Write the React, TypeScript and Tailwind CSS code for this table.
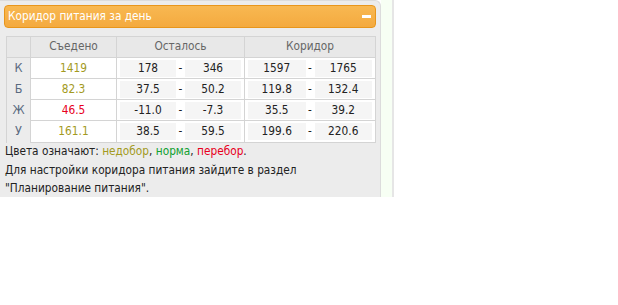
import React from 'react';

type Row = {
  label: string;
  eaten: string;
  eatenColor: string;
  left: [string, string];
  range: [string, string];
};

const rows: Row[] = [
  { label: 'К', eaten: '1419', eatenColor: 'text-[#a39a1e]', left: ['178', '346'], range: ['1597', '1765'] },
  { label: 'Б', eaten: '82.3', eatenColor: 'text-[#a39a1e]', left: ['37.5', '50.2'], range: ['119.8', '132.4'] },
  { label: 'Ж', eaten: '46.5', eatenColor: 'text-[#e8001c]', left: ['-11.0', '-7.3'], range: ['35.5', '39.2'] },
  { label: 'У', eaten: '161.1', eatenColor: 'text-[#a39a1e]', left: ['38.5', '59.5'], range: ['199.6', '220.6'] },
];

const Pair = ({ a, b }: { a: string; b: string }) => (
  <div className="flex items-center h-full px-[3px] py-[2px] gap-[2px]">
    <div className="flex-1 h-[17px] bg-[#f5f5f5] flex items-center justify-center">{a}</div>
    <div className="w-[5px] text-center">-</div>
    <div className="flex-1 h-[17px] bg-[#f5f5f5] flex items-center justify-center">{b}</div>
  </div>
);

export default function App() {
  return (
    <div className="w-[618px] h-[305px] bg-white font-['DejaVu_Sans_Condensed','DejaVu_Sans',sans-serif] text-[11.75px] text-[#222]">
      <div className="flex h-[197px]">
        <div className="w-[381px] h-full bg-[#ececec] border-r border-t border-[#dcdcdc] rounded-tr-[6px] overflow-hidden px-[4px] pt-[4px] flex flex-col">
          <div className="h-[23px] shrink-0 rounded-[4px] border border-[#e8961c] bg-gradient-to-b from-[#f8b851] to-[#f4aa3f] flex items-center justify-between pl-[3px] pr-[4px] text-white">
            <span>Коридор питания за день</span>
            <span className="w-[9px] h-[3px] bg-white" />
          </div>

          <div className="mt-[8px] mx-[2px] border border-[#d4d4d4] w-[370px] shrink-0">
            <div className="grid grid-cols-[24px_86px_128px_130px] h-[21px] bg-[#e8e8e8] text-[#666] border-b border-[#d4d4d4]">
              <div className="border-r border-[#d4d4d4]" />
              <div className="border-r border-[#d4d4d4] flex items-center justify-center">Съедено</div>
              <div className="border-r border-[#d4d4d4] flex items-center justify-center">Осталось</div>
              <div className="flex items-center justify-center">Коридор</div>
            </div>
            {rows.map((r, i) => (
              <div
                key={r.label}
                className={`grid grid-cols-[24px_86px_128px_130px] bg-white ${i < rows.length - 1 ? 'h-[21px] border-b border-[#d4d4d4]' : 'h-[21px]'}`}
              >
                <div className="border-r border-[#d4d4d4] bg-[#ececec] text-[#5a6a80] text-[12.5px] flex items-center justify-center">{r.label}</div>
                <div className={`border-r border-[#d4d4d4] flex items-center justify-center ${r.eatenColor}`}>{r.eaten}</div>
                <div className="border-r border-[#d4d4d4]"><Pair a={r.left[0]} b={r.left[1]} /></div>
                <div><Pair a={r.range[0]} b={r.range[1]} /></div>
              </div>
            ))}
          </div>

          <div className="-mt-[1px] pl-[1px] leading-[18.5px] text-[#222]">
            <p>
              Цвета означают: <span className="text-[#a39a1e]">недобор</span>, <span className="text-[#10a030]">норма</span>, <span className="text-[#e8001c]">перебор</span>.
            </p>
            <p>Для настройки коридора питания зайдите в раздел</p>
            <p>"Планирование питания".</p>
          </div>

          <div className="mt-auto flex gap-[6px] pl-[1px]">
            <div className="w-[159px] h-[2px] bg-white border-t border-x border-[#c8c8c8] rounded-t-[3px]" />
            <div className="w-[166px] h-[2px] bg-white border-t border-x border-[#c8c8c8] rounded-t-[3px]" />
          </div>
        </div>
        <div className="w-[11px] h-full bg-[#f7fff4]" />
        <div className="w-[2px] h-full bg-[#e6e6e6]" />
      </div>
    </div>
  );
}
